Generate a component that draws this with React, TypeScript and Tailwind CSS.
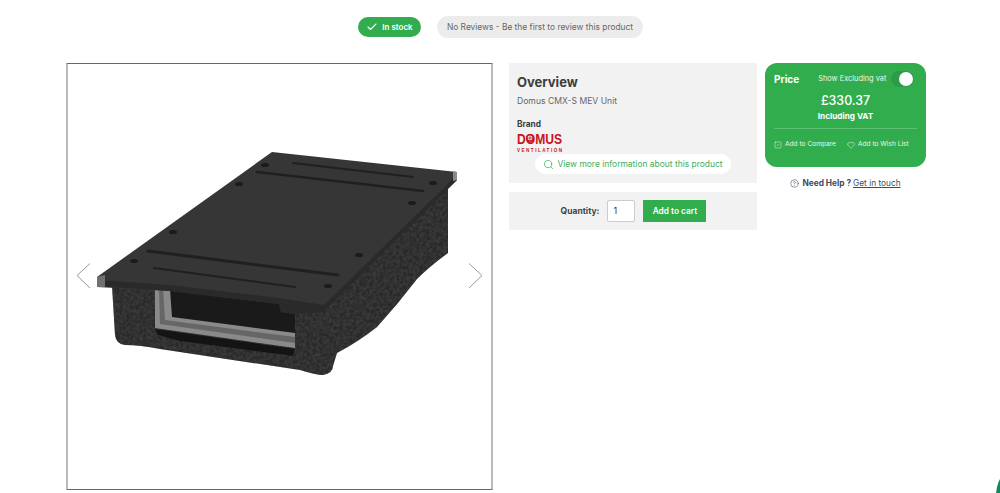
import React from "react";
import { Check, Search, SquareCheck, Heart, CircleHelp } from "lucide-react";

const SLOTS = [
  [148, 251, 338, 275, 3],
  [154, 268, 295, 287, 2],
  [257, 172, 423, 191, 2.5],
  [293, 163, 413, 177, 2],
];

const HOLES = [
  [265, 165],
  [239, 184],
  [433, 183],
  [412, 203],
  [173, 232],
  [134, 261],
  [359, 255],
  [328, 286],
];

// Product render, drawn in page coordinates
const ProductImage = () => (
  <svg width="380" height="240" viewBox="90 145 380 240">
    <defs>
      <filter id="foam" x="0" y="0" width="100%" height="100%">
        <feTurbulence type="fractalNoise" baseFrequency="0.3" numOctaves="3" seed="4" />
        <feColorMatrix values="0 0 0 0 0.06  0 0 0 0 0.06  0 0 0 0 0.06  0 0 0 1.2 -0.35" />
        <feComposite in2="SourceAlpha" operator="in" result="noise" />
        <feMerge>
          <feMergeNode in="SourceGraphic" />
          <feMergeNode in="noise" />
        </feMerge>
      </filter>
    </defs>
    <path
      d="M112 286 L115 335 Q116 344 125 345 Q140 345 160 349 L300 370 Q316 375 323 375 Q333 373 333 366 L337 353 Q358 342 377 327 Q398 304 417 279 Q430 266 448 253 L448 188 L320 300 Z"
      fill="#2a2a2a"
      filter="url(#foam)"
    />
    <path d="M155 288 L155 328 L295 348 L295 306 Z" fill="#8a8a8a" />
    <path d="M155 329 L295 349 L293 356 L180 341 L158 335 Z" fill="#141414" />
    <path d="M159 288 L160 324 L295 343 L295 337 L165 320 L163 288 Z" fill="#666666" />
    <path d="M170 289 L172 317 L295 333 L295 310 L278 303 Z" fill="#1a1a1a" />
    <path d="M97 277 L272 152 L457 172 L457 180 L323 312 L295 314 L281 312 L279 304 L170 291 L97 287 Z" fill="#363636" />
    <path d="M97 286 L170 291 L279 304 L281 312 L295 314 L323 312 L457 180 L457 175 L324 305 L278 298 L170 285 L97 280 Z" fill="#2a2a2a" />
    <path d="M97 277 L105 275 L105 287 L97 287 Z" fill="#707070" />
    <path d="M453 171 L457 172 L457 180 L453 181 Z" fill="#8a8a8a" />
    {SLOTS.map(([x1, y1, x2, y2, w], i) => (
      <line key={i} x1={x1} y1={y1} x2={x2} y2={y2} stroke="#202020" strokeWidth={w} strokeLinecap="round" />
    ))}
    {HOLES.map(([cx, cy], i) => (
      <ellipse key={i} cx={cx} cy={cy} rx="4" ry="2" fill="#1b1b1b" />
    ))}
  </svg>
);

const DomusLogo = () => (
  <svg width="46" height="21" viewBox="0 0 46 21" className="block overflow-visible">
    <text x="0" y="11.5" textLength="45" lengthAdjust="spacingAndGlyphs" fill="#c8161d" fontFamily="'Liberation Sans', sans-serif" fontWeight="700" fontSize="15.5">
      DOMUS
    </text>
    <circle cx="13" cy="6" r="4" fill="#c8161d" />
    <circle cx="13" cy="6" r="2.4" fill="#f2f2f2" />
    <path d="M13 3.6 V8.4 M10.6 6 H15.4" stroke="#c8161d" strokeWidth="0.7" />
    <text x="0" y="20" textLength="45" fill="#c8161d" fontFamily="'Liberation Sans', sans-serif" fontWeight="700" fontSize="4.6">
      VENTILATION
    </text>
  </svg>
);

const Toggle = () => (
  <span className="flex h-[16px] w-[23px] items-center justify-end rounded-full bg-[#2c9c49] pr-[1px]">
    <span className="h-[14px] w-[14px] rounded-full bg-white" />
  </span>
);

export default function App() {
  return (
    <div className="relative h-[493px] w-[1000px] overflow-hidden bg-white font-['Inter',sans-serif] text-[#3c3c3c]">
      <div className="flex h-[63px] items-start pl-[358px] pt-[16px]">
        <div className="mt-[1px] flex h-[20px] w-[63px] items-center justify-center gap-[4px] rounded-full bg-[#32ad4e] text-[8px] font-semibold text-white">
          <Check size={12} strokeWidth={2.25} />
          In stock
        </div>
        <div className="ml-[16px] flex h-[22px] w-[206px] items-center justify-center rounded-full bg-[#ececec] text-[8.4px] font-normal text-[#666666]">
          No Reviews - Be the first to review this product
        </div>
      </div>

      <div className="flex items-start pl-[66px]">
        <div className="relative flex h-[427px] w-[427px] items-center justify-center border-x-2 border-y border-x-[#bbbbbb] border-y-[#666666] pb-[23px]">
          <ProductImage />
          <svg className="absolute left-[8px] top-[199px]" width="15" height="26" viewBox="0 0 15 26" fill="none" stroke="#999999" strokeWidth="1">
            <path d="M14 0.5 L1 12.5 L14 25" />
          </svg>
          <svg className="absolute right-[8px] top-[199px]" width="15" height="26" viewBox="0 0 15 26" fill="none" stroke="#999999" strokeWidth="1">
            <path d="M1 0.5 L14 12.5 L1 25" />
          </svg>
        </div>

        <div className="ml-[16px] flex w-[248px] flex-col gap-[9px]">
          <div className="relative h-[120px] bg-[#f2f2f2] px-[8px] pt-[11px]">
            <div className="text-[13px] font-bold leading-[17px] text-[#3c3c3c]">Overview</div>
            <div className="mt-[4px] text-[8.6px] leading-[12px] text-[#666666]">Domus CMX-S MEV Unit</div>
            <div className="mt-[12px] text-[8.3px] font-bold leading-[10px] text-[#3c3c3c]">Brand</div>
            <div className="mt-[3px]">
              <DomusLogo />
            </div>
            <div className="absolute left-[26px] top-[91px] flex h-[20px] w-[196px] items-center justify-center gap-[3px] rounded-full bg-white text-[8.45px] font-normal text-[#3fae5a]">
              <Search size={11} strokeWidth={1.5} className="text-[#32ad4e]" />
              View more information about this product
            </div>
          </div>
          <div className="flex h-[38px] items-center justify-center bg-[#f2f2f2] pl-[1px]">
            <span className="text-[8.5px] font-bold text-[#444444]">Quantity:</span>
            <div className="ml-[8px] flex h-[22px] w-[28px] items-center rounded-[2px] border border-[#cccccc] bg-white pl-[5px] text-[9px] text-[#333333]">
              1
            </div>
            <div className="ml-[8px] flex h-[22px] w-[63px] items-center justify-center bg-[#32ad4e] text-[8.3px] font-semibold text-white">
              Add to cart
            </div>
          </div>
        </div>

        <div className="ml-[8px] w-[161px]">
          <div className="h-[104px] rounded-[12px] bg-[#32ad4e] px-[9px] pt-[8px] text-white">
            <div className="flex items-center">
              <span className="text-[10px] font-bold">Price</span>
              <span className="ml-[19px] text-[7.4px] font-normal text-[#e8f6eb]">Show Excluding vat</span>
              <span className="ml-[5px]">
                <Toggle />
              </span>
            </div>
            <div className="mt-[5px] text-center text-[12.4px] font-medium leading-[17px]">£330.37</div>
            <div className="mt-[2px] text-center text-[8.2px] font-bold leading-[11px]">Including VAT</div>
            <div className="mt-[6px] border-t border-[#5dbf73]" />
            <div className="mt-[11px] flex items-center text-[6.6px] text-[#e8f6eb]">
              <SquareCheck size={8} strokeWidth={1.5} />
              <span className="ml-[3px]">Add to Compare</span>
              <Heart size={8} strokeWidth={1.5} className="ml-[11px]" />
              <span className="ml-[3px]">Add to Wish List</span>
            </div>
          </div>
          <div className="mt-[10px] flex items-center justify-center gap-[2px] text-[8.3px] leading-[12px] text-[#3f4a5c]">
            <CircleHelp size={9} strokeWidth={1.5} />
            <span className="ml-[1px] font-bold">Need Help ?</span>
            <span className="underline">Get in touch</span>
          </div>
        </div>
      </div>

      <div className="absolute bottom-[-36px] right-[-64px] h-[68px] w-[68px] rounded-full bg-[#0e8a5f]" />
    </div>
  );
}
